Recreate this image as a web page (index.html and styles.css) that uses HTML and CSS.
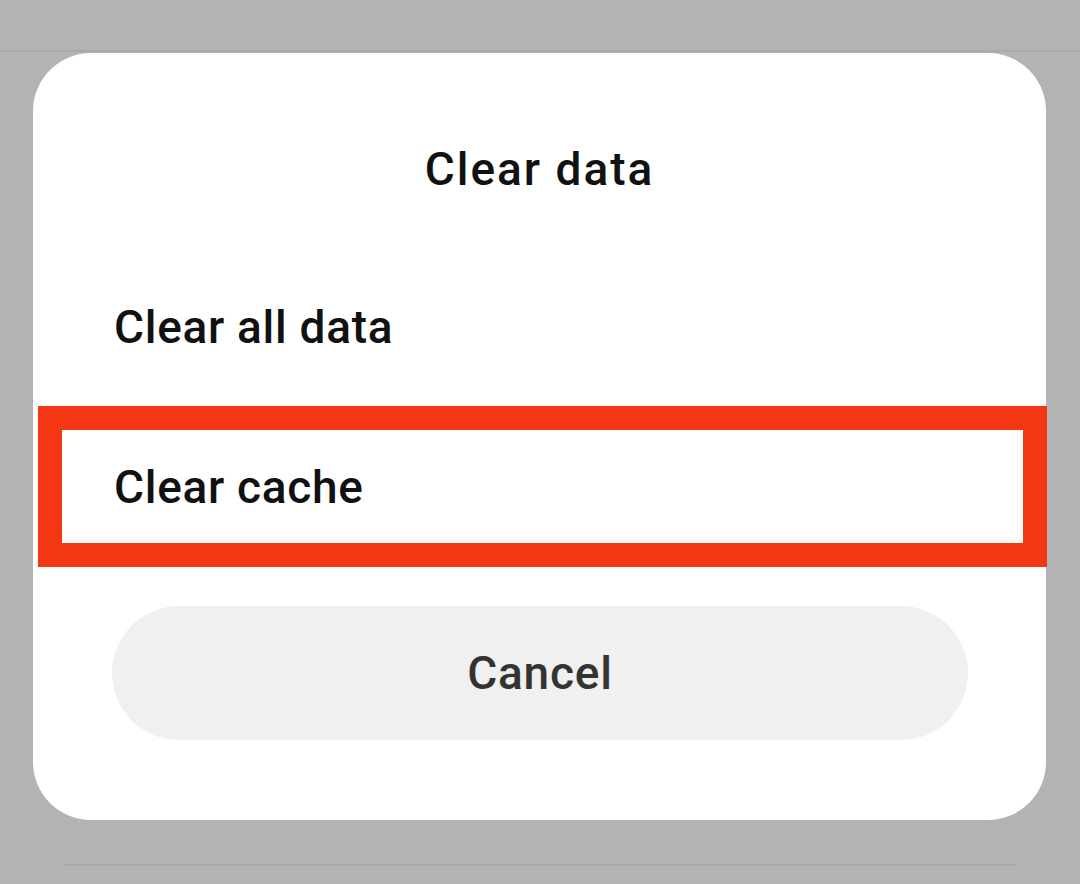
FILE: index.html
```html
<!DOCTYPE html>
<html lang="en">
<head>
    <meta charset="UTF-8">
    <meta name="viewport" content="width=device-width, initial-scale=1.0">
    <title>Clear data</title>
    <link rel="stylesheet" href="styles.css">
</head>
<body>
    <div class="line line-top"></div>

    <!-- Dialog -->
    <div class="dialog">
        <h1 class="dialog-title">Clear data</h1>
        <ul class="options">
            <li class="option">Clear all data</li>
            <li class="option highlighted">
                Clear cache
                <span class="mark"></span>
            </li>
        </ul>
        <button class="cancel-button">Cancel</button>
    </div>

    <div class="line line-bottom"></div>
</body>
</html>
```

FILE: styles.css
```css
* {
    margin: 0;
    padding: 0;
    box-sizing: border-box;
}

body {
    font-family: Roboto, "Noto Sans", Arial, sans-serif;
    background: #b3b3b3;
    width: 1080px;
    height: 884px;
    overflow: hidden;
}

.line {
    height: 2px;
    background: #a9a9a9;
}

.line-top {
    margin-top: 50px;
}

.line-bottom {
    margin: 44px 64px 0 64px;
}

.dialog {
    margin: 1px 0 0 33px;
    width: 1013px;
    background: #ffffff;
    border-radius: 58px;
    padding: 86px 0 80px 0;
}

.dialog-title {
    text-align: center;
    font-size: 46px;
    font-weight: 500;
    line-height: 60px;
    letter-spacing: 2px;
    color: #111;
    margin-bottom: 48px;
}

.options {
    list-style: none;
}

.option {
    height: 160px;
    display: flex;
    align-items: center;
    padding-left: 81px;
    font-size: 46px;
    font-weight: 500;
    line-height: 60px;
    letter-spacing: 0.7px;
    color: #111;
}

.highlighted {
    position: relative;
}

/* red annotation box */
.mark {
    position: absolute;
    top: -1px;
    left: 5px;
    right: -1px;
    bottom: 0;
    border: 24px solid #f43713;
}

.cancel-button {
    display: block;
    margin: 39px 78px 0 79px;
    width: 856px;
    height: 134px;
    border: none;
    border-radius: 67px;
    background: #f0f0f0;
    font-family: inherit;
    font-size: 46px;
    font-weight: 500;
    letter-spacing: 0.8px;
    color: #333;
}
```
